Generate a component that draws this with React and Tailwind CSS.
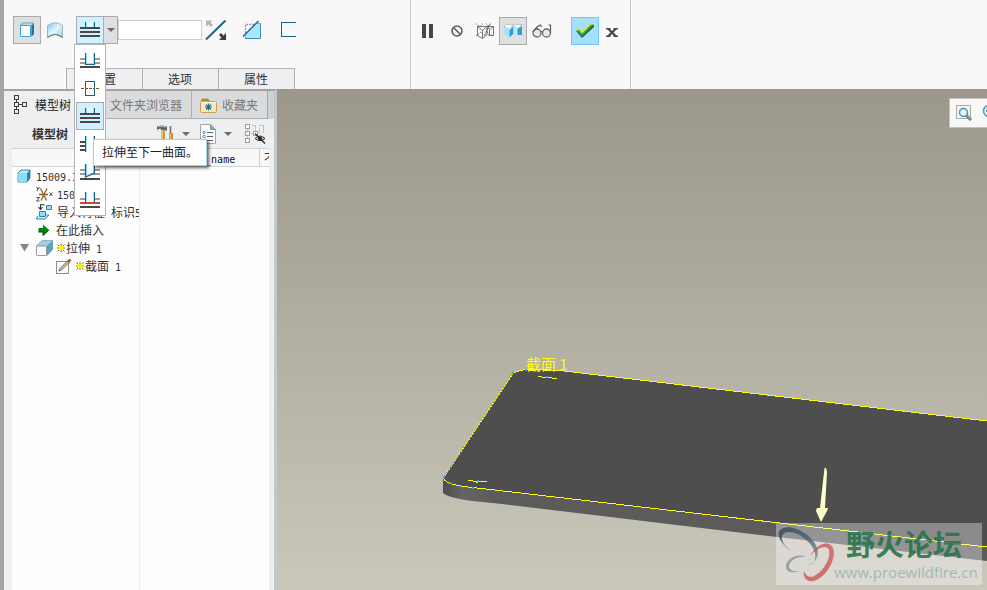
import React from "react";

const UI = "font-['Noto_Sans_CJK_SC',sans-serif]";

function Svg({ w, h, children, crisp, className = "" }) {
  return (
    <svg
      width={w}
      height={h}
      viewBox={`0 0 ${w} ${h}`}
      fill="none"
      shapeRendering={crisp ? "crispEdges" : "auto"}
      className={`block shrink-0 ${className}`}
      aria-hidden="true"
    >
      {children}
    </svg>
  );
}

const DARK = "#484848";
const GREY = "#9c9c9c";
const TEAL = "#156385";
const SKY = "#8fe0fb";

/* ---------- toolbar icons ---------- */

const SolidIcon = () => (
  <Svg w={16} h={16}>
    <path d="M1 3 3 1h12v11l-3 3H1z" fill="#7fd0ee" />
    <path d="M1.500 3 3.500 1h11L12 3.500z" fill="#c2effc" stroke="#3a86a6" strokeWidth=".7" />
    <rect x="1.500" y="3.500" width="10" height="11" rx="1" fill="#fdfdfd" stroke="#35a0cf" />
    <path d="M12.500 4 15 1.500V12L12.500 14.500z" fill="#2b6f90" />
  </Svg>
);

const SurfaceIcon = () => (
  <Svg w={18} h={18}>
    <defs>
      <linearGradient id="surf" x1="0" x2="1" y1="0" y2="1">
        <stop offset="0" stopColor="#6fc4e4" />
        <stop offset=".5" stopColor="#e2f8ff" />
        <stop offset="1" stopColor="#8ad4ee" />
      </linearGradient>
    </defs>
    <path d="M1.500 4.500Q9-1 16.500 4.500V16.500Q9 10.500 1.500 16.500z" fill="url(#surf)" stroke="#a3b4bc" />
    <path d="M1.500 16.500Q9 10.500 16.500 16.500" stroke="#76777a" strokeWidth="1.200" />
  </Svg>
);

const ToNextIcon = () => (
  <Svg w={20} h={16} crisp>
    <rect x="6" y="0" width="8" height="6" fill="#e9fafe" />
    <path d="M5 0h1v5H5zM14 0h1v5h-1z" fill={TEAL} />
    <path d="M6 0h1v5H6zM13 0h1v5h-1z" fill={SKY} />
    <path d="M0 5h20v2H0zM0 9h20v2H0zM0 13h20v2H0z" fill={DARK} />
  </Svg>
);

const BlindIcon = () => (
  <Svg w={20} h={16} crisp>
    <path d="M0 6h20v2H0zM0 10h20v2H0z" fill={GREY} />
    <path d="M0 14h20v2H0z" fill={DARK} />
    <path d="M5 1h10v12H5z" fill="#fff" />
    <path d="M5 1h1v12H5zM14 1h1v12h-1zM5 12h10v1H5z" fill={TEAL} />
    <path d="M6 1h1v11H6zM13 1h1v11h-1zM6 11h8v1H6z" fill={SKY} />
  </Svg>
);

const SymmetricIcon = () => (
  <Svg w={20} h={16} crisp>
    <path d="M5 1h10v15H5z" fill={TEAL} />
    <path d="M6 2h8v13H6z" fill="#fff" />
    <path d="M1 8h3v1H1zM5 8h3v1H5zM9 8h3v1H9zM13 8h2v1h-2zM16 8h3v1h-3z" fill="#7a5a1c" />
  </Svg>
);

const ThroughAllIcon = () => (
  <Svg w={20} h={16} crisp>
    <path d="M0 5h20v2H0zM0 9h20v2H0zM0 13h20v2H0z" fill={DARK} />
    <path d="M5 0h10v16H5z" fill="#fff" />
    <path d="M5 0h1v16H5zM14 0h1v16h-1z" fill={TEAL} />
    <path d="M6 0h1v16H6zM13 0h1v16h-1z" fill={SKY} />
  </Svg>
);

const UntilIcon = () => (
  <Svg w={20} h={16}>
    <path d="M0 5h20v2H0zM0 9h20v2H0z" fill={GREY} />
    <path d="M0 14h20v2H0z" fill={DARK} />
    <path d="M5.500 0h9v9l-9 4z" fill="#fff" />
    <path d="M6.500 0v11.500l7-3V0" stroke={SKY} />
    <path d="M5.500 0v13l9-4V0" stroke={TEAL} strokeWidth="1.200" />
  </Svg>
);

const ToSelectedIcon = () => (
  <Svg w={20} h={16} crisp>
    <path d="M0 6h20v2H0z" fill={GREY} />
    <path d="M5 0h10v10H5z" fill="#fff" />
    <path d="M5 0h1v10H5zM14 0h1v10h-1z" fill={TEAL} />
    <path d="M6 0h1v10H6zM13 0h1v10h-1z" fill={SKY} />
    <path d="M0 10h20v2H0z" fill="#c44a34" />
    <path d="M0 14h20v2H0z" fill={DARK} />
  </Svg>
);

const FlipIcon = () => (
  <Svg w={22} h={20}>
    <path d="M1 19.500 20.500.500" stroke={TEAL} strokeWidth="2" />
    <path d="M1 .500h6.500L5.500 2.500 8 5 6 7 3.500 4.500 1 6.500z" fill="#b4b4b4" />
    <path d="M21 20h-7l2.500-2.500L14 15l2-2 2.500 2.500L21 13z" fill="#3d3d3d" />
  </Svg>
);

const RemoveIcon = () => (
  <Svg w={20} h={20}>
    <path d="M3.500 13V4.500H13" stroke="#9c9c9c" strokeWidth="1.400" strokeDasharray="2 1" />
    <path d="M15.500 3.500h3v15h-15v-3" fill="#a8e8fc" stroke="#3a8fb5" />
    <path d="M3.500 15.500l12-12h2v14h-14z" fill="#a8e8fc" />
    <path d="M1 16.500 16.500 1" stroke={TEAL} strokeWidth="1.400" />
  </Svg>
);

const ThickenIcon = () => (
  <Svg w={16} h={16} crisp>
    <path d="M16 .500H1.500v14H16" stroke={TEAL} />
  </Svg>
);

const Caret = ({ className = "" }) => (
  <Svg w={8} h={4} className={className}>
    <path d="M0 0h8L4 4z" fill="#6a6a6a" />
  </Svg>
);

const PauseIcon = () => (
  <Svg w={12} h={14} crisp>
    <path d="M0 0h4v14H0zM7 0h4v14H7z" fill="#474747" />
  </Svg>
);

const ForbidIcon = () => (
  <Svg w={12} h={12}>
    <circle cx="6" cy="6" r="5" stroke="#5a5c61" strokeWidth="1.600" />
    <path d="M2.500 2.500l7 7" stroke="#5a5c61" strokeWidth="1.600" />
  </Svg>
);

const WireIcon = () => (
  <Svg w={20} h={16}>
    <g stroke="#55575b" strokeWidth=".8">
      <path d="M2.500 3.500h16M2.500 3.500l5 4v8M2.500 3.500v9l5 3M7.500 7.500l4.500-4v8l-4.500 4M12.500 3.500l2 3v6l-2-1M14.500 6.500l4-3v9h-4" />
      <path d="M1 .500l3.500 3M8 .500 5 3.500M11 .500l3 3M16 .500l-3 3M1 13l5-4 2 2M12 9l6 4" strokeDasharray="1.500 1" />
    </g>
    <path d="M9.500 12.500 15 1" stroke="#333" strokeWidth=".9" strokeDasharray="2 1" />
  </Svg>
);

const ShadedIcon = () => (
  <Svg w={20} h={14}>
    <path d="M1 2.500 3 .500h7l-3.500 5z" fill="#fff" stroke="#9aa4a9" strokeWidth=".6" />
    <path d="M10.500 2 12 .500h7l-4 4z" fill="#fff" stroke="#9aa4a9" strokeWidth=".6" />
    <path d="M1 2.500l5.500 4v7L1 10z" fill="#9be5fd" />
    <path d="M6.500 6.500 10.500 2v7.500l-4 4z" fill="#2a9dde" />
    <path d="M10.500 2l4 3v5.500l-4-1z" fill="#b5edfe" />
    <path d="M14.500 5 19 2v9h-4.500z" fill="#2f9fd6" />
  </Svg>
);

const GlassesIcon = () => (
  <Svg w={20} h={14}>
    <circle cx="5" cy="9" r="4" fill="#e0ebf2" stroke="#6a6c70" strokeWidth="1.300" />
    <circle cx="14.500" cy="9" r="4" fill="#e0ebf2" stroke="#6a6c70" strokeWidth="1.300" />
    <path d="M1 8 5.500 2.500 8.500 1l1 2M18.500 9V1H16.500M9 8q.8-1 1.500 0" stroke="#55575b" strokeWidth="1.200" />
  </Svg>
);

const CheckIcon = () => (
  <Svg w={20} h={16}>
    <path d="M1 8h4l2 3L17 1h2v3L7 15z" fill="#1d6847" />
    <path d="M1 7h4l2 3L16 1h3L7 13z" fill="#37a05d" />
    <path d="M1 6.500h4l2 3L15.500 1H19" stroke="#e4ee00" strokeWidth="1.400" />
  </Svg>
);

const CloseIcon = () => (
  <Svg w={12} h={9}>
    <path d="M2.500 1l7 7M9.500 1l-7 7" stroke="#474747" strokeWidth="2.200" />
    <path d="M0 .700h4.500M7.500.700H12M0 8.300h4.500M7.500 8.300H12" stroke="#474747" strokeWidth="1.400" />
  </Svg>
);

/* ---------- navigator icons ---------- */

const TreeIcon = () => (
  <Svg w={14} h={20} crisp>
    <path d="M1.500.500h4v4h-4zM1.500 7.500h4v4h-4zM1.500 14.500h4v4h-4zM9.500 7.500h4v4h-4z" stroke="#3d3d3d" />
    <path d="M3.500 5v2M3.500 12v2M6 9.500h3" stroke="#3d3d3d" />
  </Svg>
);

const FolderIcon = ({ star }) => (
  <Svg w={18} h={16}>
    <path d="M1 3q0-1.500 1.500-1.500H8L10 4v2H1z" fill="#b98a37" />
    <rect x=".5" y="4.500" width="16" height="11" rx="1" fill="#fbe7b5" stroke="#c9a058" />
    <path d="M1.500 5.500h14" stroke="#fffbea" />
    {star && (
      <path d="M8.500 6.500v7M5 10h7M6 7.500l5 5M11 7.500l-5 5" stroke="#1b7391" strokeWidth="1.100" />
    )}
  </Svg>
);

const ToolsIcon = () => (
  <Svg w={18} h={18}>
    <path d="M1 1.500q4-2 10 0v4H6L4 3.500 1 5z" fill="#5f656d" />
    <path d="M2 1.500q4-1 8 .500" stroke="#c3c8cd" />
    <rect x="5" y="5.500" width="4" height="12" fill="#d39a45" />
    <path d="M6 5.500v12" stroke="#f4d79b" strokeWidth="1.200" />
    <path d="M14.500 1v8" stroke="#6b7078" strokeWidth="1.600" />
    <rect x="13" y="8" width="4" height="9.500" rx="1" fill="#cf9038" />
    <path d="M14.300 9v8" stroke="#f0cf8c" />
  </Svg>
);

const ListIcon = () => (
  <Svg w={16} h={20}>
    <path d="M.500.500h10l5 5v14H.500z" fill="#f7fbfd" stroke="#a3a8ac" />
    <path d="M10.500.500v5h5z" fill="#6fb7d2" stroke="#7d9aa7" />
    <path d="M7 8.500h6M7 12.500h6M7 16.500h6" stroke="#5b5e62" />
    <circle cx="4" cy="8.500" r="1.200" stroke="#6d7074" strokeWidth=".8" />
    <circle cx="4" cy="12.500" r="1.200" stroke="#6d7074" strokeWidth=".8" />
    <circle cx="4" cy="16.500" r="1.200" stroke="#6d7074" strokeWidth=".8" />
  </Svg>
);

const HideTreeIcon = () => (
  <Svg w={21} h={20}>
    <g shapeRendering="crispEdges">
      <path d="M2.500 5v2M2.500 12v2M5 9.500h3M10.500 7V1.500H7M14 1.500h4.500V9M14.500 4v6" stroke="#c3c5c7" />
      <path d="M.500.500h4v4h-4zM.500 7.500h4v4h-4zM.500 14.500h4v4h-4zM8.500 7.500h4v4h-4z" fill="#fff" stroke="#9b9da0" />
    </g>
    <path d="M10 14.500q5-5 10 0-5 4.500-10 0z" fill="#b9bbbd" stroke="#333" />
    <circle cx="15" cy="14.500" r="2" fill="#333" />
    <path d="M10 9.500l10 10" stroke="#222" strokeWidth="1.200" />
  </Svg>
);

const PartIcon = () => (
  <Svg w={14} h={14}>
    <path d="M1 4 4 1h9v8l-3 4H1z" fill="#2f87ae" stroke="#246b8c" strokeWidth=".8" strokeLinejoin="round" />
    <path d="M1.500 4 4.300 1.500H12.500L10 4z" fill="#c3effc" />
    <rect x="1" y="4" width="9" height="9" rx="1" fill="#8bdcf8" />
  </Svg>
);

const CsysIcon = () => (
  <Svg w={17} h={17}>
    <path d="M3 8.500h9M4.500 2.500l6 12M11 2.500l-6 12" stroke="#8a6224" strokeWidth="1.300" />
    <path d="M.500 1 2 3 3.500 1M2 3 1 5M.500 11.500H3.500L.500 15H3.500M13.500 6.500l3 3.500M16.500 6.500l-3 3.500" stroke="#333" strokeWidth=".9" />
  </Svg>
);

const ImportIcon = () => (
  <Svg w={17} h={16}>
    <path d="M10.500 1.500h5v4h-5z" fill="#9be2f8" stroke="#2f87ae" />
    <path d="M8.500.700H4.500V5M2.500 3.200 4.500 5.500l2-2.300" stroke="#333" strokeWidth="1.100" />
    <path d="M1.500 12 .500 15h8.500l4-4H10" fill="#d3f3fd" stroke="#2f87ae" />
    <path d="M3.500 7.500h6v5h-6z" fill="#8fdcf8" stroke="#2f87ae" />
  </Svg>
);

const InsertIcon = () => (
  <Svg w={12} h={12}>
    <path d="M.500 4H5V.500L11 6l-6 5.500V8H.500z" fill="#07870b" />
    <path d="M.500 8H5v3.500L11 6" stroke="#0a3d0a" />
  </Svg>
);

const ExtrudeIcon = () => (
  <Svg w={17} h={16}>
    <path d="M.500 6 6 .500h10.500v9L11 15.500z" fill="#69b4d6" stroke="#77858c" strokeWidth=".8" />
    <path d="M.500 6 6 .500h10.500L11 6z" fill="#9fd0e5" />
    <path d="M11 6l5.500-5.500v9L11 15.500z" fill="#5aa2c4" />
    <rect x=".5" y="6" width="10" height="9.500" rx="1" fill="#fafafa" stroke="#999" />
  </Svg>
);

const SketchIcon = () => (
  <Svg w={16} h={16}>
    <rect x=".5" y="3.500" width="12" height="12" fill="#fbfbfb" stroke="#8d8f92" />
    <path d="M3 13 4 10.500 11.500 3l1.500 1.500L5.500 12z" fill="#d8ccb2" stroke="#444" strokeWidth=".8" />
    <path d="M11.500 3 13.500 1l1.500 1.500-2 2z" fill="#c44c40" stroke="#7d2e28" strokeWidth=".6" />
  </Svg>
);

const StarIcon = () => (
  <Svg w={8} h={8}>
    <path d="M4 0v8M0 4h8M.500.500l7 7M7.500.500l-7 7" stroke="#7d7700" />
    <path d="M1.500 2h5v4h-5z" fill="#fff200" />
  </Svg>
);

const ZoomRegionIcon = () => (
  <Svg w={17} h={17}>
    <path d="M.500.500h14v13H.500z" fill="#f3f3f0" stroke="#a9a9a3" />
    <path d="M10 10l5 5" stroke="#6e6e6e" strokeWidth="3" />
    <path d="M11 10.500l4 4" stroke="#cfcfcf" />
    <circle cx="7.500" cy="7.500" r="4" fill="#dff4fd" stroke="#4c93b5" strokeWidth="1.500" />
  </Svg>
);

const ZoomInIcon = () => (
  <Svg w={16} h={16}>
    <circle cx="7" cy="6" r="5.500" fill="#dff4fd" stroke="#4c9fc5" strokeWidth="1.500" />
    <path d="M4 6h6M7 3v6" stroke="#156385" strokeWidth="1.500" />
    <path d="M11 10l4 4" stroke="#777" strokeWidth="2" />
  </Svg>
);

/* ---------- building blocks ---------- */

function Tool({ label, children, className = "" }) {
  return (
    <button
      type="button"
      aria-label={label}
      className={`flex size-7 shrink-0 items-center justify-center ${className}`}
    >
      {children}
    </button>
  );
}

const Latin = ({ children }) => (
  <span className="font-['DejaVu_Sans_Mono',monospace] text-[10px] whitespace-pre">{children}</span>
);

const depthOptions = [
  { name: "盲孔", icon: <BlindIcon /> },
  { name: "对称", icon: <SymmetricIcon /> },
  { name: "到下一个", icon: <ToNextIcon />, active: true },
  { name: "穿透", icon: <ThroughAllIcon /> },
  { name: "穿至", icon: <UntilIcon /> },
  { name: "到选定项", icon: <ToSelectedIcon /> },
];

function DepthMenu() {
  return (
    <div className="relative ml-[7px] flex">
      <button
        type="button"
        aria-label="到下一个"
        className="flex size-7 items-center justify-center border border-[#a9abad] bg-[#d0f1ff]"
      >
        <ToNextIcon />
      </button>
      <button
        type="button"
        aria-label="深度选项"
        className="flex h-7 w-[14px] items-center justify-center border border-l-0 border-[#a9abad] bg-[#dedfe1]"
      >
        <Caret />
      </button>
      <ul className="absolute top-full -left-0.5 z-20 border border-[#b4b4b4] bg-white p-px">
        {depthOptions.map((o) => (
          <li key={o.name}>
            <button
              type="button"
              aria-label={o.name}
              className={`flex size-7 items-center justify-center ${
                o.active ? "border border-[#a9abad] bg-[#d0f1ff]" : ""
              }`}
            >
              {o.icon}
            </button>
          </li>
        ))}
      </ul>
      <div
        role="tooltip"
        className="absolute top-[123px] left-[17px] z-30 border border-[#a6d3ea] bg-white px-2 pb-px text-[12px] leading-[24px] whitespace-nowrap text-[#222] shadow-[2px_2px_3px_rgba(0,0,0,0.6)]"
      >
        拉伸至下一曲面。
      </div>
    </div>
  );
}

function Dashboard() {
  return (
    <header className="flex h-[89px] shrink-0 bg-[#f8f8f8]">
      <section className="flex w-[407px] shrink-0 flex-col justify-between border-r border-[#c6c6c6] pt-4">
        <div className="flex items-center pl-[9px]">
          <Tool label="实体" className="border border-[#a9abad] bg-[#dedfe1]">
            <SolidIcon />
          </Tool>
          <Tool label="曲面">
            <SurfaceIcon />
          </Tool>
          <DepthMenu />
          <input
            type="text"
            aria-label="深度值"
            className="h-5 w-[84px] border border-[#ccd0d4] bg-white px-1 text-[12px] outline-none"
          />
          <div className="flex gap-2">
            <Tool label="反向"><FlipIcon /></Tool>
            <Tool label="移除材料"><RemoveIcon /></Tool>
            <Tool label="加厚草绘"><ThickenIcon /></Tool>
          </div>
        </div>
        <nav className="ml-[62px] flex">
          {["放置", "选项", "属性"].map((t) => (
            <button
              key={t}
              type="button"
              className="-mr-px h-[21px] w-[77px] border border-b-0 border-[#b0b0b0] bg-[#efeff1] pr-px text-[12px] leading-5 text-[#333]"
            >
              {t}
            </button>
          ))}
        </nav>
      </section>
      <section className="flex w-[220px] shrink-0 items-start border-r border-[#c6c6c6] pt-[17px] pl-[3px]">
        <Tool label="暂停"><PauseIcon /></Tool>
        <Tool label="无预览" className="ml-px"><ForbidIcon /></Tool>
        <Tool label="分离预览"><WireIcon /></Tool>
        <Tool label="连接预览" className="border border-[#a9abad] bg-[#dedfe1]">
          <ShadedIcon />
        </Tool>
        <Tool label="校验" className="mx-px"><GlassesIcon /></Tool>
        <Tool label="确定" className="ml-[14px] border border-[#6fc8f7] bg-[#a3dffe]">
          <CheckIcon />
        </Tool>
        <Tool label="取消" className="pt-0.5 pr-0.5"><CloseIcon /></Tool>
      </section>
    </header>
  );
}

function TreeRow({ icon, star, indent, children }) {
  return (
    <li className={`flex h-[18px] items-center gap-1 whitespace-nowrap ${indent}`}>
      {icon}
      <span className="flex items-center gap-px">
        {star && <StarIcon />}
        <span>{children}</span>
      </span>
    </li>
  );
}

function Navigator() {
  return (
    <aside className="flex w-[273px] shrink-0 flex-col border-t-2 border-r-[3px] border-t-[#a2a2a2] border-r-[#c5c8ca] bg-[#eeeff1] text-[12px] text-[#333]">
      <div className="flex h-7 shrink-0 bg-[#cfd2d4]">
        <button type="button" className="flex w-[82px] items-center gap-2 bg-[#eeeff1] pl-[9px] text-[#222]">
          <TreeIcon />
          模型树
        </button>
        <button
          type="button"
          className="flex w-[106px] items-center justify-end gap-1 border-r border-b border-[#adafb1] bg-[#d9dbdd] pr-[9px] whitespace-nowrap text-[#77797b]"
        >
          <FolderIcon />
          文件夹浏览器
        </button>
        <button
          type="button"
          className="flex flex-1 items-center gap-1 border-b border-[#adafb1] bg-[#d9dbdd] pl-2 whitespace-nowrap text-[#77797b]"
        >
          <FolderIcon star />
          收藏夹
        </button>
        <span className="w-[7px] border-l border-[#a5a7a9]" />
      </div>

      <div className="flex h-[29px] shrink-0 items-center pl-7">
        <h2 className="w-[124px] font-bold">模型树</h2>
        <button type="button" aria-label="设置" className="flex items-center gap-2">
          <ToolsIcon />
          <Caret />
        </button>
        <button type="button" aria-label="显示" className="ml-[10px] flex items-center gap-2">
          <ListIcon />
          <Caret />
        </button>
        <button type="button" aria-label="隐藏树" className="ml-[13px]">
          <HideTreeIcon />
        </button>
      </div>

      <div className="mr-[5px] ml-2 flex min-h-0 flex-1 flex-col border-t border-[#d4d4d4] bg-[#fdfdfd]">
        <div className="flex h-[18px] shrink-0 border-b border-[#d4d4d4] bg-[#f8f8f9] leading-[18px]">
          <span className="w-[127px] shrink-0" />
          <span className="w-[121px] shrink-0 border-r border-[#cfcfcf] pl-[42px] text-[#111]">
            <Latin>feat_name</Latin>
          </span>
          <span className="min-w-0 flex-1 overflow-hidden pl-1 whitespace-nowrap">不</span>
        </div>
        <div className="flex min-h-0 flex-1">
          <ul className="w-[128px] shrink-0 overflow-hidden border-r border-[#ececec]">
            <TreeRow indent="pl-[5px]" icon={<PartIcon />}>
              <span className="pl-px"><Latin>15009.IGS</Latin></span>
            </TreeRow>
            <TreeRow indent="pl-6" icon={<CsysIcon />}>
              <Latin>15009</Latin>
            </TreeRow>
            <TreeRow indent="pl-6" icon={<ImportIcon />}>
              导入特征<Latin>{" "}</Latin>标识<Latin>5</Latin>
            </TreeRow>
            <TreeRow indent="pl-[26px]" icon={<InsertIcon />}>
              <span className="pl-0.5">在此插入</span>
            </TreeRow>
            <TreeRow
              indent="pl-2"
              star
              icon={
                <>
                  <Svg w={9} h={8}><path d="M0 0h9L4.500 7.500z" fill="#858585" /></Svg>
                  <span className="pl-[3px]"><ExtrudeIcon /></span>
                </>
              }
            >
              拉伸<Latin> 1</Latin>
            </TreeRow>
            <TreeRow indent="pl-11" star icon={<SketchIcon />}>
              截面<Latin> 1</Latin>
            </TreeRow>
          </ul>
        </div>
      </div>
    </aside>
  );
}

function Model() {
  return (
    <svg
      className="absolute inset-0 h-full w-full"
      viewBox="277 89 710 501"
      preserveAspectRatio="xMinYMin slice"
      role="img"
      aria-label="模型"
    >
      <defs>
        <linearGradient id="side" x1="443" x2="500" y1="0" y2="0" gradientUnits="userSpaceOnUse">
          <stop offset="0" stopColor="#4d4d4d" />
          <stop offset=".35" stopColor="#646464" />
          <stop offset="1" stopColor="#5b5b5b" />
        </linearGradient>
      </defs>
      <path d="M443 478V493Q449 498 473 501L502 504 760 535 987 561V546L473 487z" fill="url(#side)" />
      <path
        d="M443.500 478 513 373.500Q519 370 527 369.500H540Q550 369 564 371L987 421V547L473 487.500Q450 485 443.500 479z"
        fill="#4e4e4e"
      />
      <g fill="none" stroke="#ffff00" shapeRendering="crispEdges">
        <path d="M443.500 478 513 373.500Q519 370 527 369.500H540Q550 369 564 371L987 421" />
        <path d="M443.500 478Q445 485 473 487.500L987 547" />
        <path d="M538 376.500l8 1 11 1M545 378l4-1M468 480.500l9 1h10M476 483l3-2" />
      </g>
      <path d="M443.500 478 513 373.500" stroke="#4e4e4e" strokeDasharray="1 2" />
      <path d="M512 372h2v2h-2zM525 369h2v2h-2zM551 369h2v2h-2zM546 376h2v2h-2zM443 476h2v2h-2zM450 482h2v2h-2zM472 487h2v2h-2zM477 480h2v2h-2z" fill="#3f9bd0" />
      <text x="526" y="370" fontSize="15" fill="#ffff00" className={UI}>截面 1</text>
      <path d="M824.500 468h1.500l1 4-2 36h3l-1 3-6 11-5-11 1-3h3z" fill="#ffffc8" />
    </svg>
  );
}

function Watermark() {
  return (
    <div className="absolute right-[5px] bottom-[5px] flex h-[62px] w-[206px] bg-white/35">
      <svg width="58" height="62" viewBox="0 0 58 62" fill="none" className="shrink-0" aria-hidden="true">
        <defs>
          <linearGradient id="wm" x1="0" x2="1" y1="0" y2="1">
            <stop offset="0" stopColor="#34485a" />
            <stop offset=".5" stopColor="#4b6073" />
            <stop offset="1" stopColor="#8b959c" />
          </linearGradient>
        </defs>
        <path
          fillRule="evenodd"
          d="M17 30C7 23 1 14 3 9 6 2 19 3 30 11 41 19 46 31 38 39 42 31 37 22 28 15 19 8 8 7 6 13 5 18 9 24 17 30z"
          fill="url(#wm)"
          opacity=".85"
        />
        <path
          d="M30 34C22 30 12 35 10 42 9 49 16 51 24 48 17 49 13 47 13 43 14 37 22 33 30 34z"
          fill="#8d999f"
          opacity=".85"
        />
        <path
          d="M34 33C39 24 47 19 53 21 60 24 59 35 53 45 47 55 37 61 31 57 28 55 27 51 28 48 30 54 35 56 41 51 49 46 55 34 53 27 50 21 41 25 34 33z"
          fill="#c95050"
          opacity=".75"
        />
        <path d="M38 39c-2 2-3 2-5 2" stroke="#a5aaad" opacity=".6" />
      </svg>
      <div className="flex flex-1 flex-col items-start">
        <p className="pl-3 font-['Noto_Sans_CJK_SC',sans-serif] text-[29px] leading-[40px] font-bold whitespace-nowrap text-[#27734a]/90">
          野火论坛
        </p>
        <p className="font-['Open_Sans',sans-serif] text-[15px] leading-[18px] whitespace-nowrap text-[#9dbdb2]">
          www.proewildfire.cn
        </p>
      </div>
    </div>
  );
}

export default function App() {
  return (
    <div className={`flex h-screen flex-col overflow-hidden border-l-4 border-[#a5a4a3] ${UI}`}>
      <Dashboard />
      <div className="flex min-h-0 flex-1">
        <Navigator />
        <main className="relative min-w-0 flex-1 overflow-hidden bg-linear-to-b from-[#9b988b] to-[#cac7bb]">
          <Model />
          <div className="absolute top-[9px] right-0 flex h-[30px] w-[38px] items-center gap-[9px] overflow-hidden border border-r-0 border-[#c4c4c4] bg-[#f8f8f8] pl-[6px]">
            <button type="button" aria-label="重新调整"><ZoomRegionIcon /></button>
            <button type="button" aria-label="放大"><ZoomInIcon /></button>
          </div>
          <Watermark />
        </main>
      </div>
    </div>
  );
}
